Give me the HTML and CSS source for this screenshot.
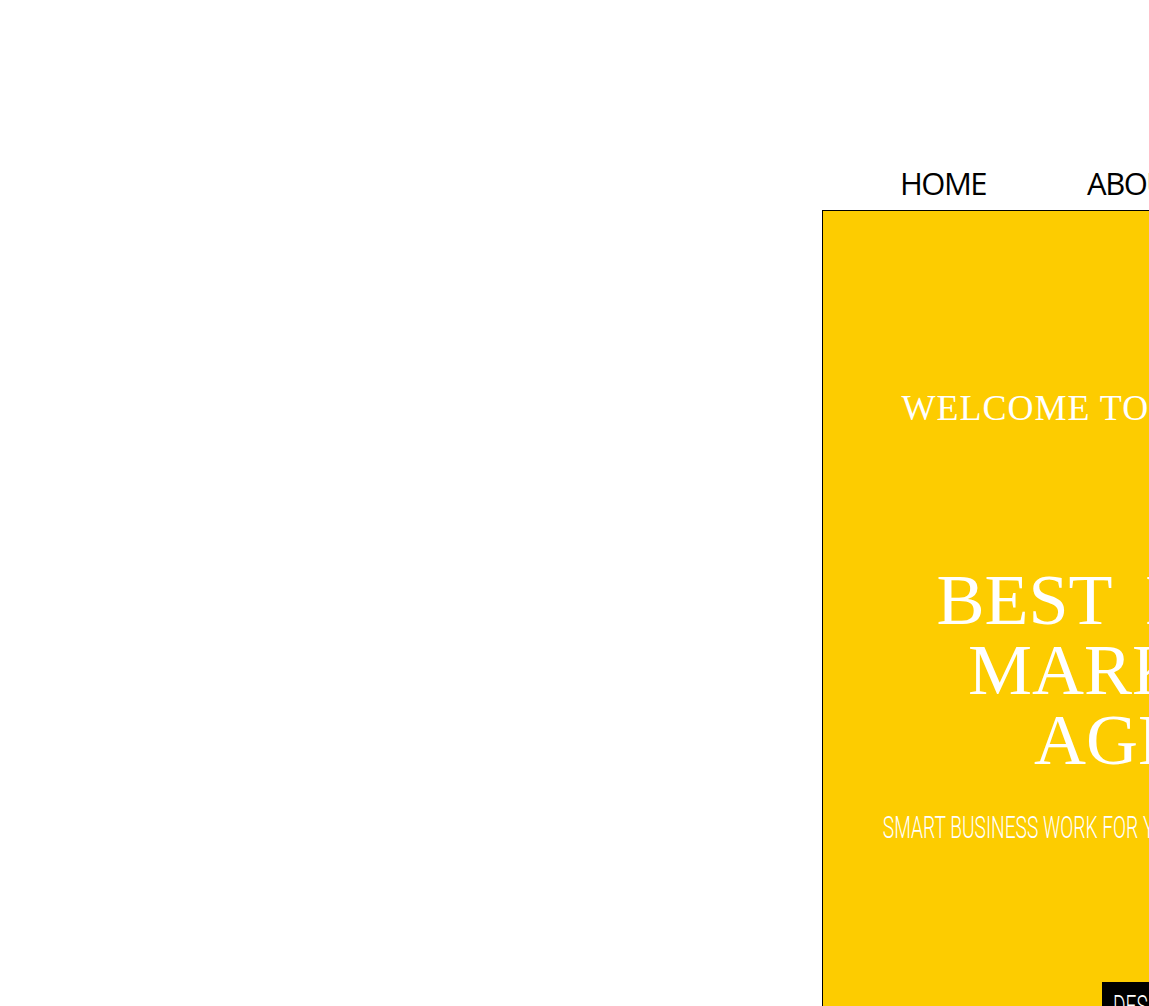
FILE: index.html
```html
<!DOCTYPE html>
<html lang="en">
<head>
<meta charset="utf-8">
<title>Agency</title>
<link rel="stylesheet" href="styles.css">
</head>
<body>
<div class="page">
  <div class="side"></div>
  <div class="main">
    <nav class="nav">
      <a class="nav-item" href="#">HOME</a>
      <a class="nav-item" href="#">ABOUT</a>
      <a class="nav-item" href="#">SERVICES</a>
      <a class="nav-item" href="#">CONTACT</a>
    </nav>
    <section class="hero">
      <p class="welcome">WELCOME TO THE MARKETING</p>
      <h1 class="title">BEST DIGITAL<br>MARKETING<br>AGENCY</h1>
      <p class="tagline"><span class="narrow">SMART BUSINESS WORK FOR YOUR COMPANY WITH CREATIVE IDEAS</span></p>
      <a class="btn" href="#"><span class="narrow-left">DESIGN SERVICES</span></a>
    </section>
  </div>
</div>
</body>
</html>
```

FILE: styles.css
```css
html, body {
  margin: 0;
  padding: 0;
  background: #ffffff;
}
body {
  overflow-x: hidden;
}
.page {
  display: flex;
  align-items: flex-start;
}
.side {
  flex: 0 0 822px;
}
.main {
  flex: 0 0 724px;
  display: flex;
  flex-direction: column;
}
.nav {
  display: flex;
  gap: 101px;
  padding: 163px 0 0 78px;
  margin-bottom: 7px;
}
.nav-item {
  font-family: "Open Sans", "Liberation Sans", sans-serif;
  font-size: 31px;
  line-height: 40px;
  letter-spacing: -1.5px;
  color: #000000;
  text-decoration: none;
  white-space: nowrap;
}
.hero {
  box-sizing: border-box;
  width: 724px;
  min-height: 900px;
  background: #fdcc00;
  border: 1px solid #000000;
  padding-top: 175px;
  text-align: center;
  color: #ffffff;
}
.welcome {
  margin: 0;
  font-family: "Liberation Serif", "Times New Roman", serif;
  font-size: 36px;
  line-height: 44px;
  letter-spacing: 1px;
  white-space: nowrap;
}
.title {
  margin: 135px 0 0;
  font-family: "Liberation Serif", "Times New Roman", serif;
  font-weight: normal;
  font-size: 72px;
  line-height: 70px;
  word-spacing: 16px;
  white-space: nowrap;
}
.tagline {
  margin: 33px -400px 0;
  font-family: "Roboto", "Liberation Sans", sans-serif;
  font-weight: 300;
  font-size: 32px;
  line-height: 38px;
  white-space: nowrap;
}
.narrow {
  display: inline-block;
  transform: scaleX(0.6);
  transform-origin: center;
}
.btn {
  display: inline-block;
  box-sizing: border-box;
  width: 164px;
  margin-top: 136px;
  padding: 5px 11px 8px;
  background: #000000;
  color: #ffffff;
  text-align: left;
  text-decoration: none;
  font-family: "Roboto", "Liberation Sans", sans-serif;
  font-weight: 300;
  font-size: 32px;
  line-height: 38px;
  white-space: nowrap;
  overflow: hidden;
}
.narrow-left {
  display: inline-block;
  transform: scaleX(0.6);
  transform-origin: left;
}
```
